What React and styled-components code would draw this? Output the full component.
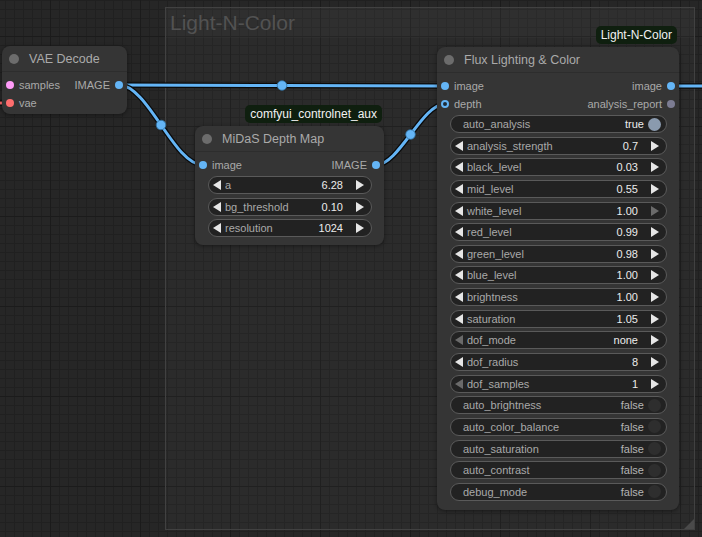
import React from 'react'
import styled, { createGlobalStyle } from 'styled-components'

const GlobalStyle = createGlobalStyle`
  html, body {
    margin: 0;
    padding: 0;
    background: #252525;
  }
  body {
    font-family: 'Liberation Sans', Arial, sans-serif;
  }
`

// Canvas with the litegraph grid
const Canvas = styled.div`
  position: relative;
  width: 702px;
  height: 537px;
  overflow: hidden;
  background-color: #262626;
  background-image:
    linear-gradient(to right, #1b1b1b 1px, transparent 1px),
    linear-gradient(to bottom, #1b1b1b 1px, transparent 1px),
    linear-gradient(to right, #202020 1px, transparent 1px),
    linear-gradient(to bottom, #202020 1px, transparent 1px);
  background-size: 90px 90px, 90px 90px, 9px 9px, 9px 9px;
  background-position: 50px 0, 0 36px, 5px 0, 0 0;
`

// Group frame
const Group = styled.div`
  position: absolute;
  left: 165px;
  top: 7px;
  width: 530px;
  height: 523px;
  box-sizing: border-box;
  border: 1px solid #414141;
  background: rgba(255, 255, 255, 0.025);
  display: flex;
  flex-direction: column;
`
const GroupTitle = styled.div`
  height: 30px;
  line-height: 30px;
  padding-left: 4px;
  font-size: 21px;
  color: #525252;
  background: rgba(255, 255, 255, 0.025);
`
const GroupCorner = styled.div`
  position: absolute;
  right: 0;
  bottom: 0;
  width: 0;
  height: 0;
  border-left: 10px solid transparent;
  border-bottom: 10px solid #4a4a4a;
`

// Links layer
const LinkLayer = styled.svg`
  position: absolute;
  left: 0;
  top: 0;
  pointer-events: none;
`

// Node
const Node = styled.div`
  position: absolute;
  left: ${(p) => p.$x}px;
  top: ${(p) => p.$y}px;
  width: ${(p) => p.$w}px;
  background: #353535;
  border-radius: 8px;
  box-shadow: 0 1px 4px rgba(0, 0, 0, 0.45);
`
const Badge = styled.div`
  position: absolute;
  right: 2px;
  bottom: calc(100% + 3px);
  height: 18px;
  line-height: 18px;
  padding: 0 5px;
  border-radius: 5px;
  background: #0f1f0f;
  color: #f2f2f2;
  font-size: 12px;
  white-space: nowrap;
`
const Header = styled.div`
  height: 26px;
  box-sizing: border-box;
  display: flex;
  align-items: center;
  gap: 10px;
  padding-left: 7px;
  border-bottom: 1px solid #2d2d2d;
`
const TitleDot = styled.span`
  width: 10px;
  height: 10px;
  border-radius: 50%;
  background: #6c6c6c;
`
const Title = styled.span`
  font-size: 12.5px;
  color: #aaaaaa;
`
const Body = styled.div`
  padding: 4px 0 ${(p) => p.$pb}px;
`
const SlotRow = styled.div`
  height: 18px;
  display: flex;
  align-items: center;
  justify-content: space-between;
  font-size: 11px;
  color: #a9a9a9;
`
const InSlot = styled.div`
  display: flex;
  align-items: center;
  gap: 5px;
  padding-left: 4px;
`
const OutSlot = styled.div`
  display: flex;
  align-items: center;
  gap: 5px;
  padding-right: 4px;
`
const SlotDot = styled.span`
  width: 8px;
  height: 8px;
  border-radius: 50%;
  box-sizing: border-box;
  background: ${(p) => (p.$hollow ? '#1d2a36' : p.$color)};
  border: ${(p) => (p.$hollow ? `2px solid ${p.$color}` : 'none')};
`
const Widgets = styled.div`
  display: flex;
  flex-direction: column;
  gap: 3.65px;
  margin: 2px 12px 0 13px;
`
const Widget = styled.div`
  height: 18px;
  box-sizing: border-box;
  display: flex;
  align-items: center;
  border: 1px solid #5a5a5a;
  border-radius: 9px;
  background: #222222;
  font-size: 11px;
  padding: ${(p) => (p.$toggle ? '0 5px 0 12px' : '0 7px 0 4px')};
`
const ArrowLeft = styled.span`
  width: 0;
  height: 0;
  border-top: 5px solid transparent;
  border-bottom: 5px solid transparent;
  border-right: 8px solid ${(p) => (p.$dim ? '#6a6a6a' : '#e6e6e6')};
  margin-right: 4px;
`
const ArrowRight = styled.span`
  width: 0;
  height: 0;
  border-top: 5px solid transparent;
  border-bottom: 5px solid transparent;
  border-left: 8px solid ${(p) => (p.$dim ? '#6a6a6a' : '#e6e6e6')};
  margin-left: 13px;
`
const Label = styled.span`
  flex: 1;
  color: #a9a9a9;
  white-space: nowrap;
`
const Value = styled.span`
  color: ${(p) => (p.$muted ? '#b4b4b4' : '#ececec')};
  white-space: nowrap;
`
const Knob = styled.span`
  width: 13px;
  height: 13px;
  border-radius: 50%;
  margin-left: 4px;
  background: ${(p) => (p.$on ? '#8a9aae' : '#2e2e2e')};
`

const COLORS = {
  IMAGE: '#64b5f6',
  LATENT: '#ff9cf9',
  VAE: '#ff6e6e',
  STRING: '#7c7c92',
}

const HEADER = 26
const ROW = 18

// node geometry
const VAE = { x: 2, y: 46, w: 125 }
const MIDAS = { x: 195, y: 126, w: 189 }
const FLUX = { x: 437, y: 47, w: 242 }

const slotY = (node, i) => node.y + HEADER + 4 + ROW * i + ROW / 2
const inX = (node) => node.x + 8
const outX = (node) => node.x + node.w - 8

const bezier = (a, b) => {
  const c = Math.hypot(b[0] - a[0], b[1] - a[1]) * 0.25
  const p1 = [a[0] + c, a[1]]
  const p2 = [b[0] - c, b[1]]
  const mid = [
    (a[0] + 3 * p1[0] + 3 * p2[0] + b[0]) / 8,
    (a[1] + 3 * p1[1] + 3 * p2[1] + b[1]) / 8,
  ]
  return {
    d: `M ${a[0]} ${a[1]} C ${p1[0]} ${p1[1]}, ${p2[0]} ${p2[1]}, ${b[0]} ${b[1]}`,
    mid,
  }
}

const links = [
  { from: [outX(VAE), slotY(VAE, 0)], to: [inX(FLUX), slotY(FLUX, 0)], dot: true },
  { from: [outX(VAE), slotY(VAE, 0)], to: [inX(MIDAS), slotY(MIDAS, 0)], dot: true },
  { from: [outX(MIDAS), slotY(MIDAS, 0)], to: [inX(FLUX), slotY(FLUX, 1)], dot: true },
  { from: [outX(FLUX), slotY(FLUX, 0)], to: [740, slotY(FLUX, 0)], dot: false },
]

const midasWidgets = [
  { label: 'a', value: '6.28' },
  { label: 'bg_threshold', value: '0.10' },
  { label: 'resolution', value: '1024' },
]

const fluxWidgets = [
  { label: 'auto_analysis', toggle: true, on: true },
  { label: 'analysis_strength', value: '0.7' },
  { label: 'black_level', value: '0.03' },
  { label: 'mid_level', value: '0.55' },
  { label: 'white_level', value: '1.00', rightDim: true },
  { label: 'red_level', value: '0.99' },
  { label: 'green_level', value: '0.98' },
  { label: 'blue_level', value: '1.00' },
  { label: 'brightness', value: '1.00' },
  { label: 'saturation', value: '1.05' },
  { label: 'dof_mode', value: 'none', leftDim: true },
  { label: 'dof_radius', value: '8' },
  { label: 'dof_samples', value: '1', leftDim: true },
  { label: 'auto_brightness', toggle: true },
  { label: 'auto_color_balance', toggle: true },
  { label: 'auto_saturation', toggle: true },
  { label: 'auto_contrast', toggle: true },
  { label: 'debug_mode', toggle: true },
]

const WidgetRow = ({ w }) =>
  w.toggle ? (
    <Widget $toggle>
      <Label>{w.label}</Label>
      <Value $muted={!w.on}>{w.on ? 'true' : 'false'}</Value>
      <Knob $on={w.on} />
    </Widget>
  ) : (
    <Widget>
      <ArrowLeft $dim={w.leftDim} />
      <Label>{w.label}</Label>
      <Value>{w.value}</Value>
      <ArrowRight $dim={w.rightDim} />
    </Widget>
  )

const Slots = ({ inputs = [], outputs = [] }) => {
  const n = Math.max(inputs.length, outputs.length)
  return Array.from({ length: n }).map((_, i) => (
    <SlotRow key={i}>
      {inputs[i] ? (
        <InSlot>
          <SlotDot $color={COLORS[inputs[i].type]} $hollow={inputs[i].hollow} />
          <span>{inputs[i].name}</span>
        </InSlot>
      ) : (
        <span />
      )}
      {outputs[i] ? (
        <OutSlot>
          <span>{outputs[i].name}</span>
          <SlotDot $color={COLORS[outputs[i].type]} />
        </OutSlot>
      ) : (
        <span />
      )}
    </SlotRow>
  ))
}

const App = () => {
  const vaeSlotY = slotY(VAE, 1)

  return (
    <>
      <GlobalStyle />
      <Canvas>
        <Group>
          <GroupTitle>Light-N-Color</GroupTitle>
          <GroupCorner />
        </Group>

        <LinkLayer width='702' height='537'>
          <line x1='-10' y1={vaeSlotY} x2='12' y2={vaeSlotY} stroke='#000' strokeWidth='5' />
          <line x1='-10' y1={vaeSlotY} x2='12' y2={vaeSlotY} stroke={COLORS.VAE} strokeWidth='3' />
          {links.map((l, i) => {
            const { d, mid } = bezier(l.from, l.to)
            return (
              <g key={i}>
                <path d={d} fill='none' stroke='#0a0a0a' strokeWidth='5.5' />
                <path d={d} fill='none' stroke={COLORS.IMAGE} strokeWidth='3' />
                {l.dot && (
                  <circle cx={mid[0]} cy={mid[1]} r='4.8' fill={COLORS.IMAGE} stroke='#2f6e9e' strokeWidth='0.8' />
                )}
              </g>
            )
          })}
        </LinkLayer>

        <Node $x={VAE.x} $y={VAE.y} $w={VAE.w}>
          <Header>
            <TitleDot />
            <Title>VAE Decode</Title>
          </Header>
          <Body $pb={2}>
            <Slots
              inputs={[
                { name: 'samples', type: 'LATENT' },
                { name: 'vae', type: 'VAE' },
              ]}
              outputs={[{ name: 'IMAGE', type: 'IMAGE' }]}
            />
          </Body>
        </Node>

        <Node $x={MIDAS.x} $y={MIDAS.y} $w={MIDAS.w}>
          <Badge>comfyui_controlnet_aux</Badge>
          <Header>
            <TitleDot />
            <Title>MiDaS Depth Map</Title>
          </Header>
          <Body $pb={8}>
            <Slots
              inputs={[{ name: 'image', type: 'IMAGE' }]}
              outputs={[{ name: 'IMAGE', type: 'IMAGE' }]}
            />
            <Widgets>
              {midasWidgets.map((w) => (
                <WidgetRow key={w.label} w={w} />
              ))}
            </Widgets>
          </Body>
        </Node>

        <Node $x={FLUX.x} $y={FLUX.y} $w={FLUX.w}>
          <Badge>Light-N-Color</Badge>
          <Header>
            <TitleDot />
            <Title>Flux Lighting &amp; Color</Title>
          </Header>
          <Body $pb={9}>
            <Slots
              inputs={[
                { name: 'image', type: 'IMAGE' },
                { name: 'depth', type: 'IMAGE', hollow: true },
              ]}
              outputs={[
                { name: 'image', type: 'IMAGE' },
                { name: 'analysis_report', type: 'STRING' },
              ]}
            />
            <Widgets>
              {fluxWidgets.map((w) => (
                <WidgetRow key={w.label} w={w} />
              ))}
            </Widgets>
          </Body>
        </Node>
      </Canvas>
    </>
  )
}

export default App
